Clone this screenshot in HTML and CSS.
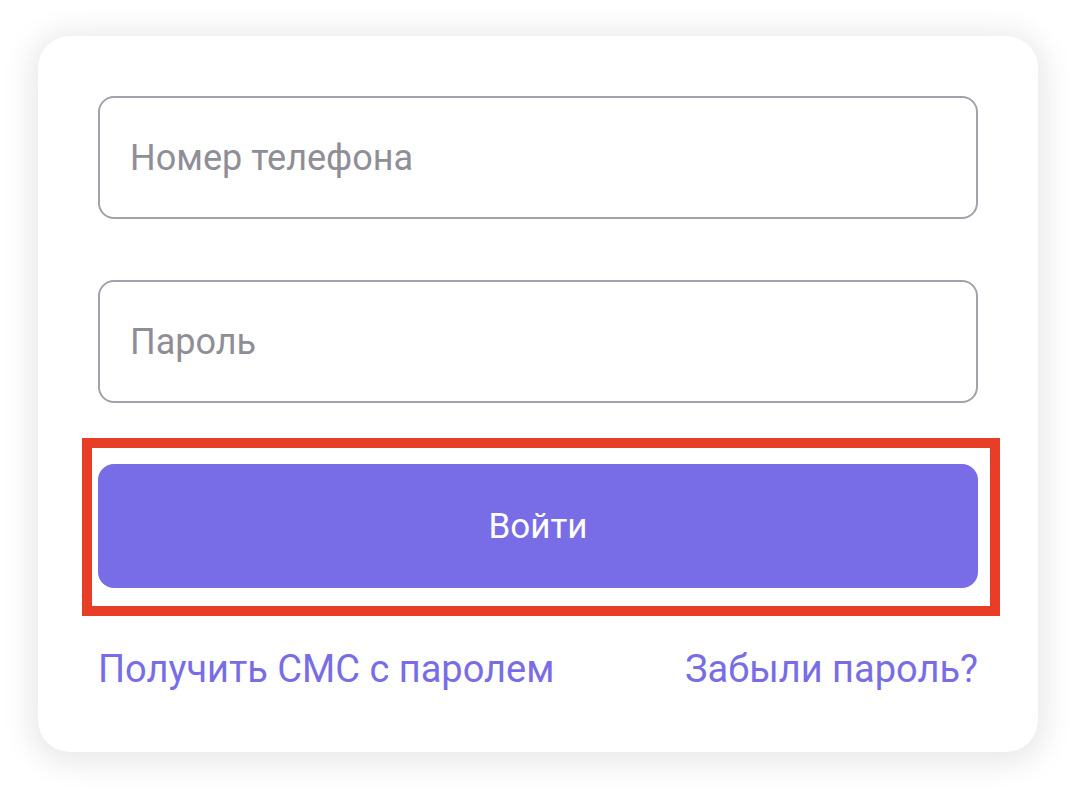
FILE: index.html
```html
<!DOCTYPE html>
<html lang="ru">
<head>
<meta charset="utf-8">
<link rel="stylesheet" href="styles.css">
<title>Вход</title>
</head>
<body>
<div class="card">
  <div class="field"><span class="placeholder">Номер телефона</span></div>
  <div class="field"><span class="placeholder">Пароль</span></div>
  <div class="btn-wrap">
    <button class="btn">Войти</button>
    <div class="highlight"></div>
  </div>
  <div class="links">
    <a class="link">Получить СМС с паролем</a>
    <a class="link">Забыли пароль?</a>
  </div>
</div>
</body>
</html>
```
FILE: styles.css
```css
html, body {
  margin: 0;
  padding: 0;
  background: #ffffff;
  font-family: Roboto, "Noto Sans", sans-serif;
}
body {
  width: 1074px;
  height: 802px;
  overflow: hidden;
}
.card {
  box-sizing: border-box;
  margin: 36px 0 0 38px;
  width: 1000px;
  height: 716px;
  padding: 60px 60px 0 60px;
  background: #fff;
  border-radius: 32px;
  box-shadow: 0 4px 30px 8px rgba(0, 0, 0, 0.09);
  display: flex;
  flex-direction: column;
}
.field {
  box-sizing: border-box;
  height: 123px;
  border: 2px solid #a3a1ab;
  border-radius: 16px;
  display: flex;
  align-items: center;
  padding-left: 30px;
  margin-bottom: 61px;
}
.placeholder {
  font-size: 36px;
  color: #8f8e96;
}
.btn-wrap {
  position: relative;
}
.btn {
  display: block;
  width: 100%;
  height: 124px;
  border: none;
  border-radius: 16px;
  background: #786de6;
  color: #fff;
  font-family: Roboto, "Noto Sans", sans-serif;
  font-size: 35px;
  padding: 0;
}
.highlight {
  position: absolute;
  left: -16px;
  top: -26px;
  right: -22px;
  bottom: -28px;
  border: 10px solid #e83d27;
}
.links {
  margin-top: 59px;
  display: flex;
  justify-content: space-between;
}
.link {
  font-size: 38px;
  color: #786de6;
  line-height: normal;
}
```
